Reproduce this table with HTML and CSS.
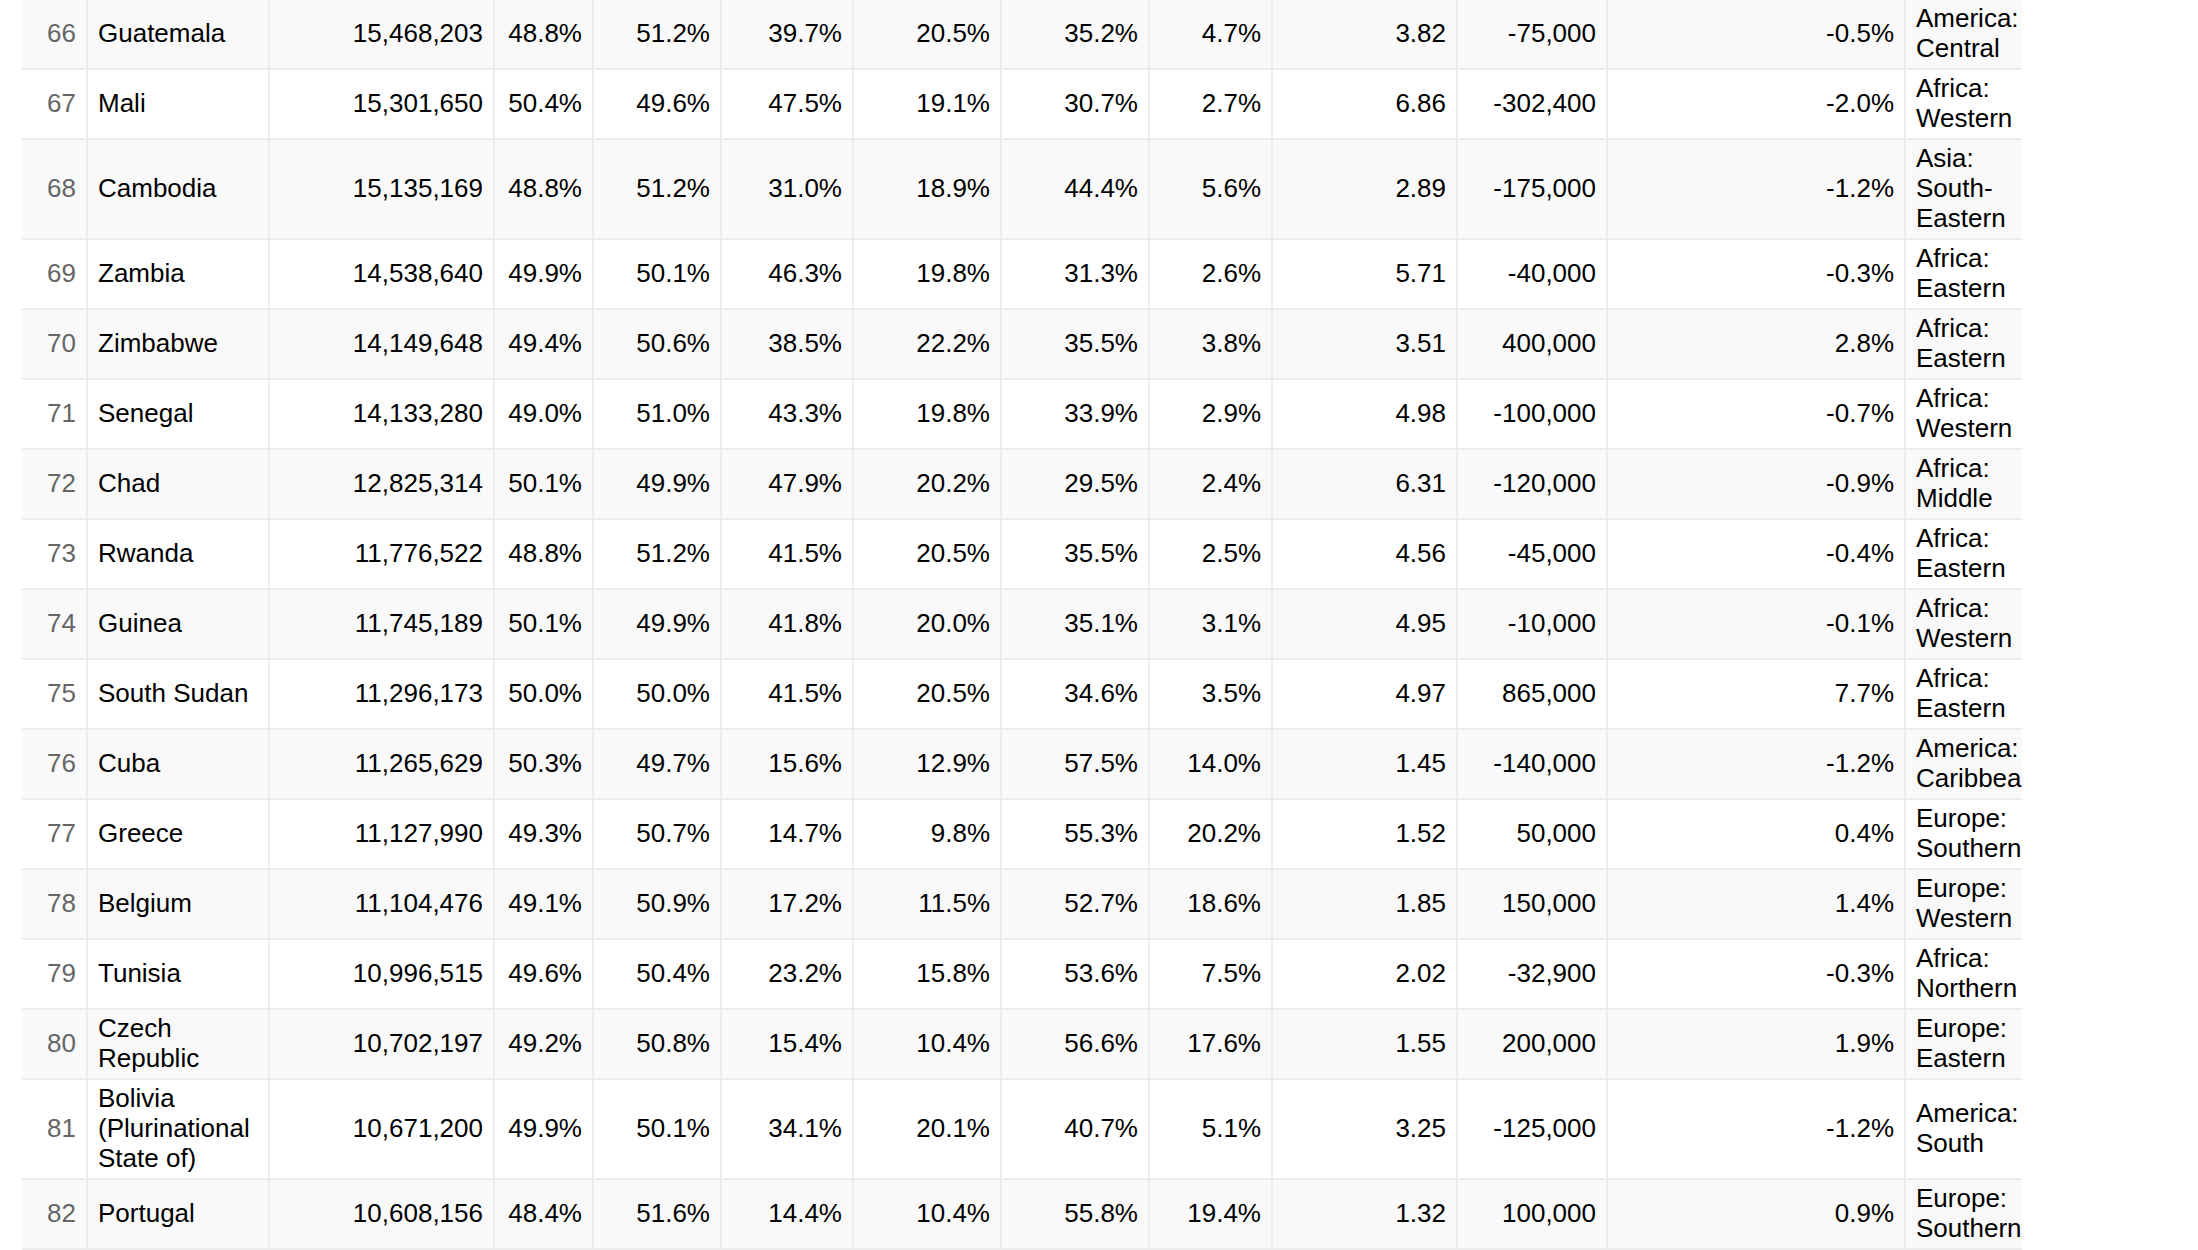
FILE: index.html
```html
<!DOCTYPE html>
<html lang="en">
<head>
<meta charset="utf-8">
<title>Population table</title>
<link rel="stylesheet" href="styles.css">
</head>
<body>
<div class="table">
  <div class="row"><div class="cell rank">66</div><div class="cell name">Guatemala</div><div class="cell num">15,468,203</div><div class="cell num">48.8%</div><div class="cell num">51.2%</div><div class="cell num">39.7%</div><div class="cell num">20.5%</div><div class="cell num">35.2%</div><div class="cell num">4.7%</div><div class="cell num">3.82</div><div class="cell num">-75,000</div><div class="cell num">-0.5%</div><div class="cell region">America: Central</div></div>
  <div class="row"><div class="cell rank">67</div><div class="cell name">Mali</div><div class="cell num">15,301,650</div><div class="cell num">50.4%</div><div class="cell num">49.6%</div><div class="cell num">47.5%</div><div class="cell num">19.1%</div><div class="cell num">30.7%</div><div class="cell num">2.7%</div><div class="cell num">6.86</div><div class="cell num">-302,400</div><div class="cell num">-2.0%</div><div class="cell region">Africa: Western</div></div>
  <div class="row"><div class="cell rank">68</div><div class="cell name">Cambodia</div><div class="cell num">15,135,169</div><div class="cell num">48.8%</div><div class="cell num">51.2%</div><div class="cell num">31.0%</div><div class="cell num">18.9%</div><div class="cell num">44.4%</div><div class="cell num">5.6%</div><div class="cell num">2.89</div><div class="cell num">-175,000</div><div class="cell num">-1.2%</div><div class="cell region">Asia: South-Eastern</div></div>
  <div class="row"><div class="cell rank">69</div><div class="cell name">Zambia</div><div class="cell num">14,538,640</div><div class="cell num">49.9%</div><div class="cell num">50.1%</div><div class="cell num">46.3%</div><div class="cell num">19.8%</div><div class="cell num">31.3%</div><div class="cell num">2.6%</div><div class="cell num">5.71</div><div class="cell num">-40,000</div><div class="cell num">-0.3%</div><div class="cell region">Africa: Eastern</div></div>
  <div class="row"><div class="cell rank">70</div><div class="cell name">Zimbabwe</div><div class="cell num">14,149,648</div><div class="cell num">49.4%</div><div class="cell num">50.6%</div><div class="cell num">38.5%</div><div class="cell num">22.2%</div><div class="cell num">35.5%</div><div class="cell num">3.8%</div><div class="cell num">3.51</div><div class="cell num">400,000</div><div class="cell num">2.8%</div><div class="cell region">Africa: Eastern</div></div>
  <div class="row"><div class="cell rank">71</div><div class="cell name">Senegal</div><div class="cell num">14,133,280</div><div class="cell num">49.0%</div><div class="cell num">51.0%</div><div class="cell num">43.3%</div><div class="cell num">19.8%</div><div class="cell num">33.9%</div><div class="cell num">2.9%</div><div class="cell num">4.98</div><div class="cell num">-100,000</div><div class="cell num">-0.7%</div><div class="cell region">Africa: Western</div></div>
  <div class="row"><div class="cell rank">72</div><div class="cell name">Chad</div><div class="cell num">12,825,314</div><div class="cell num">50.1%</div><div class="cell num">49.9%</div><div class="cell num">47.9%</div><div class="cell num">20.2%</div><div class="cell num">29.5%</div><div class="cell num">2.4%</div><div class="cell num">6.31</div><div class="cell num">-120,000</div><div class="cell num">-0.9%</div><div class="cell region">Africa: Middle</div></div>
  <div class="row"><div class="cell rank">73</div><div class="cell name">Rwanda</div><div class="cell num">11,776,522</div><div class="cell num">48.8%</div><div class="cell num">51.2%</div><div class="cell num">41.5%</div><div class="cell num">20.5%</div><div class="cell num">35.5%</div><div class="cell num">2.5%</div><div class="cell num">4.56</div><div class="cell num">-45,000</div><div class="cell num">-0.4%</div><div class="cell region">Africa: Eastern</div></div>
  <div class="row"><div class="cell rank">74</div><div class="cell name">Guinea</div><div class="cell num">11,745,189</div><div class="cell num">50.1%</div><div class="cell num">49.9%</div><div class="cell num">41.8%</div><div class="cell num">20.0%</div><div class="cell num">35.1%</div><div class="cell num">3.1%</div><div class="cell num">4.95</div><div class="cell num">-10,000</div><div class="cell num">-0.1%</div><div class="cell region">Africa: Western</div></div>
  <div class="row"><div class="cell rank">75</div><div class="cell name">South Sudan</div><div class="cell num">11,296,173</div><div class="cell num">50.0%</div><div class="cell num">50.0%</div><div class="cell num">41.5%</div><div class="cell num">20.5%</div><div class="cell num">34.6%</div><div class="cell num">3.5%</div><div class="cell num">4.97</div><div class="cell num">865,000</div><div class="cell num">7.7%</div><div class="cell region">Africa: Eastern</div></div>
  <div class="row"><div class="cell rank">76</div><div class="cell name">Cuba</div><div class="cell num">11,265,629</div><div class="cell num">50.3%</div><div class="cell num">49.7%</div><div class="cell num">15.6%</div><div class="cell num">12.9%</div><div class="cell num">57.5%</div><div class="cell num">14.0%</div><div class="cell num">1.45</div><div class="cell num">-140,000</div><div class="cell num">-1.2%</div><div class="cell region">America: Caribbean</div></div>
  <div class="row"><div class="cell rank">77</div><div class="cell name">Greece</div><div class="cell num">11,127,990</div><div class="cell num">49.3%</div><div class="cell num">50.7%</div><div class="cell num">14.7%</div><div class="cell num">9.8%</div><div class="cell num">55.3%</div><div class="cell num">20.2%</div><div class="cell num">1.52</div><div class="cell num">50,000</div><div class="cell num">0.4%</div><div class="cell region">Europe: Southern</div></div>
  <div class="row"><div class="cell rank">78</div><div class="cell name">Belgium</div><div class="cell num">11,104,476</div><div class="cell num">49.1%</div><div class="cell num">50.9%</div><div class="cell num">17.2%</div><div class="cell num">11.5%</div><div class="cell num">52.7%</div><div class="cell num">18.6%</div><div class="cell num">1.85</div><div class="cell num">150,000</div><div class="cell num">1.4%</div><div class="cell region">Europe: Western</div></div>
  <div class="row"><div class="cell rank">79</div><div class="cell name">Tunisia</div><div class="cell num">10,996,515</div><div class="cell num">49.6%</div><div class="cell num">50.4%</div><div class="cell num">23.2%</div><div class="cell num">15.8%</div><div class="cell num">53.6%</div><div class="cell num">7.5%</div><div class="cell num">2.02</div><div class="cell num">-32,900</div><div class="cell num">-0.3%</div><div class="cell region">Africa: Northern</div></div>
  <div class="row"><div class="cell rank">80</div><div class="cell name">Czech Republic</div><div class="cell num">10,702,197</div><div class="cell num">49.2%</div><div class="cell num">50.8%</div><div class="cell num">15.4%</div><div class="cell num">10.4%</div><div class="cell num">56.6%</div><div class="cell num">17.6%</div><div class="cell num">1.55</div><div class="cell num">200,000</div><div class="cell num">1.9%</div><div class="cell region">Europe: Eastern</div></div>
  <div class="row"><div class="cell rank">81</div><div class="cell name">Bolivia (Plurinational State of)</div><div class="cell num">10,671,200</div><div class="cell num">49.9%</div><div class="cell num">50.1%</div><div class="cell num">34.1%</div><div class="cell num">20.1%</div><div class="cell num">40.7%</div><div class="cell num">5.1%</div><div class="cell num">3.25</div><div class="cell num">-125,000</div><div class="cell num">-1.2%</div><div class="cell region">America: South</div></div>
  <div class="row"><div class="cell rank">82</div><div class="cell name">Portugal</div><div class="cell num">10,608,156</div><div class="cell num">48.4%</div><div class="cell num">51.6%</div><div class="cell num">14.4%</div><div class="cell num">10.4%</div><div class="cell num">55.8%</div><div class="cell num">19.4%</div><div class="cell num">1.32</div><div class="cell num">100,000</div><div class="cell num">0.9%</div><div class="cell region">Europe: Southern</div></div>
</div>
</body>
</html>
```

FILE: styles.css
```css
html, body {
  margin: 0;
  padding: 0;
  background: #ffffff;
}

body {
  font-family: "Liberation Sans", Arial, Helvetica, sans-serif;
  font-size: 26px;
  line-height: 30px;
  color: #000000;
}

.table {
  margin-left: 22px;
  width: 2000px;
}

.row {
  display: grid;
  grid-template-columns: 66px 182px 225px 99px 128px 132px 148px 148px 123px 185px 150px 298px 116px;
  border-bottom: 2px solid #ececec;
  background: #ffffff;
}

.row:nth-child(odd) {
  background: #f9f9f9;
}

.cell {
  box-sizing: border-box;
  display: flex;
  align-items: center;
  padding: 3px 10px 5px 10px;
  border-right: 2px solid #ececec;
  min-width: 0;
}

.rank {
  justify-content: flex-end;
  padding-right: 10px;
  color: #666666;
}

.name {
  padding-left: 10px;
}

.num {
  justify-content: flex-end;
  white-space: nowrap;
}

.region {
  border-right: none;
  padding-right: 0;
  overflow: hidden;
}
```
